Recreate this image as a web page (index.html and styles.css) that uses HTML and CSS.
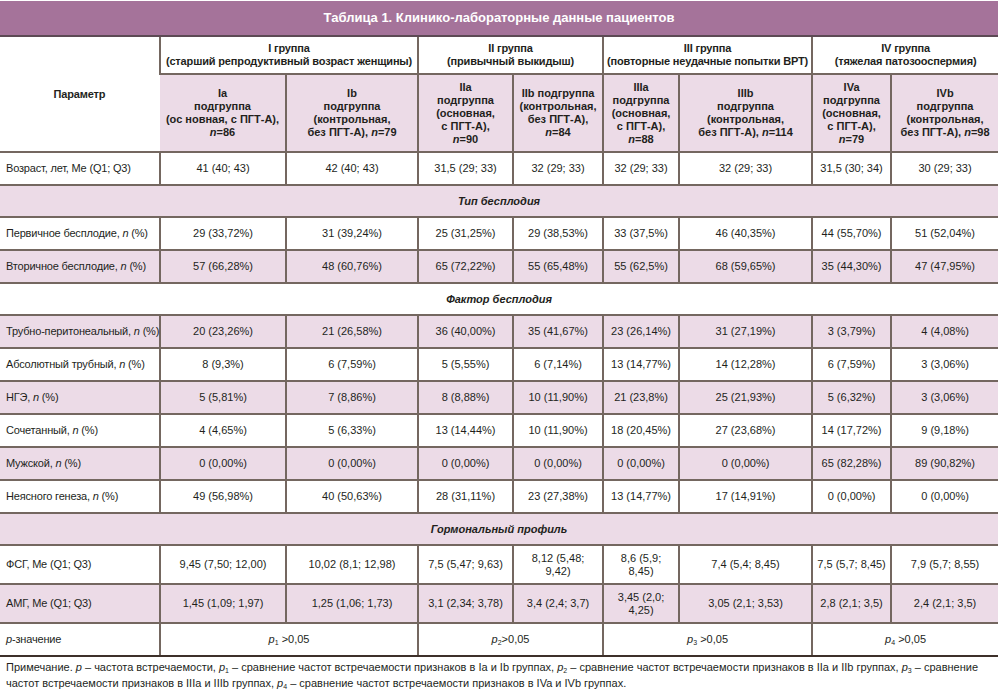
FILE: index.html
```html
<!DOCTYPE html>
<html lang="ru">
<head>
<meta charset="utf-8">
<title>Таблица 1</title>
<link rel="stylesheet" href="styles.css">
</head>
<body>
<div class="page">
  <div class="title">Таблица 1. Клинико-лабораторные данные пациентов</div>
  <table class="tbl">
    <colgroup>
      <col class="c0"><col class="c1"><col class="c2"><col class="c3"><col class="c4"><col class="c5"><col class="c6"><col class="c7"><col class="c8">
    </colgroup>
    <thead>
      <tr class="h1">
        <th rowspan="2" class="param-h">Параметр</th>
        <th colspan="2">I группа<br>(старший репродуктивный возраст женщины)</th>
        <th colspan="2">II группа<br>(привычный выкидыш)</th>
        <th colspan="2">III группа<br>(повторные неудачные попытки ВРТ)</th>
        <th colspan="2">IV группа<br>(тяжелая патозооспермия)</th>
      </tr>
      <tr class="h2 pink">
        <th>Ia<br>подгруппа<br>(ос новная, с ПГТ-А),<br><i>n</i>=86</th>
        <th>Ib<br>подгруппа<br>(контрольная,<br>без ПГТ-А), <i>n</i>=79</th>
        <th>IIa<br>подгруппа<br>(основная,<br>с ПГТ-А),<br><i>n</i>=90</th>
        <th>IIb подгруппа<br>(контрольная,<br>без ПГТ-А),<br><i>n</i>=84</th>
        <th>IIIa<br>подгруппа<br>(основная,<br>с ПГТ-А),<br><i>n</i>=88</th>
        <th>IIIb<br>подгруппа<br>(контрольная,<br>без ПГТ-А), <i>n</i>=114</th>
        <th>IVa<br>подгруппа<br>(основная,<br>с ПГТ-А),<br><i>n</i>=79</th>
        <th>IVb<br>подгруппа<br>(контрольная,<br>без ПГТ-А), <i>n</i>=98</th>
      </tr>
    </thead>
    <tbody>
      <tr class="row">
        <td class="p">Возраст, лет, Me (Q1; Q3)</td>
        <td>41 (40; 43)</td><td>42 (40; 43)</td><td>31,5 (29; 33)</td><td>32 (29; 33)</td><td>32 (29; 33)</td><td>32 (29; 33)</td><td>31,5 (30; 34)</td><td>30 (29; 33)</td>
      </tr>
      <tr class="sec pink"><td colspan="9">Тип бесплодия</td></tr>
      <tr class="row">
        <td class="p">Первичное бесплодие, <i>n</i> (%)</td>
        <td>29 (33,72%)</td><td>31 (39,24%)</td><td>25 (31,25%)</td><td>29 (38,53%)</td><td>33 (37,5%)</td><td>46 (40,35%)</td><td>44 (55,70%)</td><td>51 (52,04%)</td>
      </tr>
      <tr class="row pink">
        <td class="p">Вторичное бесплодие, <i>n</i> (%)</td>
        <td>57 (66,28%)</td><td>48 (60,76%)</td><td>65 (72,22%)</td><td>55 (65,48%)</td><td>55 (62,5%)</td><td>68 (59,65%)</td><td>35 (44,30%)</td><td>47 (47,95%)</td>
      </tr>
      <tr class="sec"><td colspan="9">Фактор бесплодия</td></tr>
      <tr class="row pink">
        <td class="p">Трубно-перитонеальный, <i>n</i> (%)</td>
        <td>20 (23,26%)</td><td>21 (26,58%)</td><td>36 (40,00%)</td><td>35 (41,67%)</td><td>23 (26,14%)</td><td>31 (27,19%)</td><td>3 (3,79%)</td><td>4 (4,08%)</td>
      </tr>
      <tr class="row">
        <td class="p">Абсолютный трубный, <i>n</i> (%)</td>
        <td>8 (9,3%)</td><td>6 (7,59%)</td><td>5 (5,55%)</td><td>6 (7,14%)</td><td>13 (14,77%)</td><td>14 (12,28%)</td><td>6 (7,59%)</td><td>3 (3,06%)</td>
      </tr>
      <tr class="row pink">
        <td class="p">НГЭ, <i>n</i> (%)</td>
        <td>5 (5,81%)</td><td>7 (8,86%)</td><td>8 (8,88%)</td><td>10 (11,90%)</td><td>21 (23,8%)</td><td>25 (21,93%)</td><td>5 (6,32%)</td><td>3 (3,06%)</td>
      </tr>
      <tr class="row">
        <td class="p">Сочетанный, <i>n</i> (%)</td>
        <td>4 (4,65%)</td><td>5 (6,33%)</td><td>13 (14,44%)</td><td>10 (11,90%)</td><td>18 (20,45%)</td><td>27 (23,68%)</td><td>14 (17,72%)</td><td>9 (9,18%)</td>
      </tr>
      <tr class="row pink">
        <td class="p">Мужской, <i>n</i> (%)</td>
        <td>0 (0,00%)</td><td>0 (0,00%)</td><td>0 (0,00%)</td><td>0 (0,00%)</td><td>0 (0,00%)</td><td>0 (0,00%)</td><td>65 (82,28%)</td><td>89 (90,82%)</td>
      </tr>
      <tr class="row">
        <td class="p">Неясного генеза, <i>n</i> (%)</td>
        <td>49 (56,98%)</td><td>40 (50,63%)</td><td>28 (31,11%)</td><td>23 (27,38%)</td><td>13 (14,77%)</td><td>17 (14,91%)</td><td>0 (0,00%)</td><td>0 (0,00%)</td>
      </tr>
      <tr class="sec pink"><td colspan="9">Гормональный профиль</td></tr>
      <tr class="row tall">
        <td class="p">ФСГ, Me (Q1; Q3)</td>
        <td>9,45 (7,50; 12,00)</td><td>10,02 (8,1; 12,98)</td><td>7,5 (5,47; 9,63)</td><td>8,12 (5,48;<br>9,42)</td><td>8,6 (5,9;<br>8,45)</td><td>7,4 (5,4; 8,45)</td><td>7,5 (5,7; 8,45)</td><td>7,9 (5,7; 8,55)</td>
      </tr>
      <tr class="row tall pink">
        <td class="p">АМГ, Me (Q1; Q3)</td>
        <td>1,45 (1,09; 1,97)</td><td>1,25 (1,06; 1,73)</td><td>3,1 (2,34; 3,78)</td><td>3,4 (2,4; 3,7)</td><td>3,45 (2,0;<br>4,25)</td><td>3,05 (2,1; 3,53)</td><td>2,8 (2,1; 3,5)</td><td>2,4 (2,1; 3,5)</td>
      </tr>
      <tr class="row last">
        <td class="p"><i>p</i>-значение</td>
        <td colspan="2"><i>p</i><sub>1</sub> &gt;0,05</td>
        <td colspan="2"><i>p</i><sub>2</sub>&gt;0,05</td>
        <td colspan="2"><i>p</i><sub>3</sub> &gt;0,05</td>
        <td colspan="2"><i>p</i><sub>4</sub> &gt;0,05</td>
      </tr>
    </tbody>
  </table>
  <div class="note">
    <div class="note-line">Примечание. <i>p</i> – частота встречаемости, <i>p</i><sub>1</sub> – сравнение частот встречаемости признаков в Ia и Ib группах, <i>p</i><sub>2</sub> – сравнение частот встречаемости признаков в IIa и IIb группах, <i>p</i><sub>3</sub> – сравнение</div>
    <div class="note-line">частот встречаемости признаков в IIIa и IIIb группах, <i>p</i><sub>4</sub> – сравнение частот встречаемости признаков в IVa и IVb группах.</div>
  </div>
</div>
</body>
</html>
```
FILE: styles.css
```css
html, body {
  margin: 0;
  padding: 0;
  background: #ffffff;
}
body {
  font-family: "Liberation Sans", Arial, sans-serif;
  color: #231f1c;
  font-size: 11px;
}
.page {
  width: 998px;
  padding-top: 1px;
}
.title {
  background: #a5739a;
  color: #ffffff;
  font-weight: bold;
  font-size: 13px;
  text-align: center;
  height: 34px;
  line-height: 34px;
  border-bottom: 2px solid #5d4a55;
}
.tbl {
  width: 998px;
  border-collapse: collapse;
  table-layout: fixed;
}
.c0 { width: 160px; }
.c1 { width: 126px; }
.c2 { width: 132px; }
.c3 { width: 95px; }
.c4 { width: 90px; }
.c5 { width: 76px; }
.c6 { width: 133px; }
.c7 { width: 79px; }
.c8 { width: 107px; }
.tbl th, .tbl td {
  border-left: 2px solid #746760;
  border-top: 2px solid #746760;
  border-bottom: 2px solid #746760;
  padding: 0 1px;
  text-align: center;
  vertical-align: middle;
  line-height: 13px;
}
.tbl th:first-child, .tbl td:first-child { border-left: none; }
.tbl thead tr.h1 th {
  border-top: none;
  white-space: nowrap;
  letter-spacing: -0.15px;
}
.tbl th {
  font-weight: bold;
  font-size: 11px;
}
.h1 { height: 37px; }
.h2 { height: 78px; }
.pink th, .pink td { background: #ecdbe7; }
.param-h { background: #ffffff; }
.row { height: 33px; }
.row.tall { height: 39px; }
.tbl td.p {
  text-align: left;
  padding-left: 6px;
  padding-right: 0;
  white-space: nowrap;
  letter-spacing: -0.18px;
}
.sec { height: 32px; }
.sec td {
  font-weight: bold;
  font-style: italic;
}
.row.last td { border-bottom: 2px solid #3d302a; }
sub {
  font-size: 7px;
  vertical-align: -2px;
  line-height: 0;
}
.note {
  margin: 2px 0 0 0;
  padding-left: 6px;
  padding-right: 4px;
  font-size: 11px;
}
.note-line {
  line-height: 16px;
  white-space: nowrap;
}
```
